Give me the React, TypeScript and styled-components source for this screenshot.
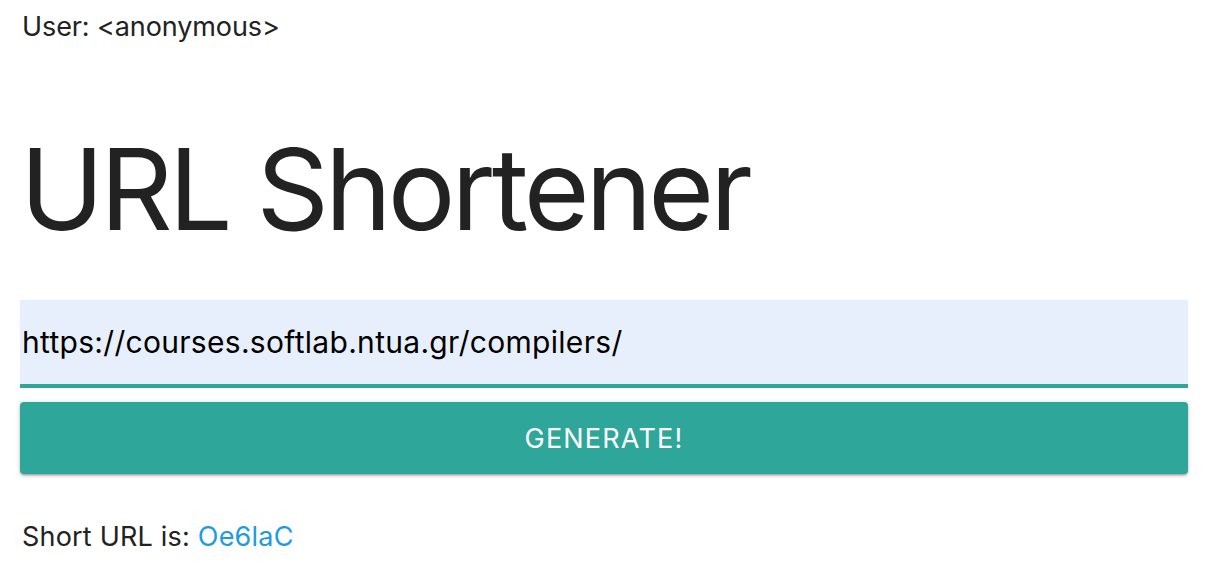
import React from "react";
import styled, { createGlobalStyle } from "styled-components";

const Global = createGlobalStyle`
  html, body { margin: 0; padding: 0; background: #fff; }
  body { font-family: Inter, "Noto Sans", sans-serif; color: #212121; }
`;

const Page = styled.div`
  padding: 0 22px 0 20px;
  display: flex;
  flex-direction: column;
`;

const UserLine = styled.div`
  font-size: 27px;
  line-height: 36px;
  padding: 9px 0 0 2px;
  color: #222;
  letter-spacing: -0.1px;
`;

const Title = styled.h1`
  margin: 74px 0 0 0;
  font-size: 113px;
  font-weight: 400;
  line-height: 140px;
  letter-spacing: -4px;
  color: #222;
`;

const Field = styled.input`
  margin-top: 41px;
  height: 88px;
  box-sizing: border-box;
  border: none;
  border-bottom: 4px solid #2ea699;
  background: #e8effc;
  padding: 0 2px;
  font-family: Inter, "Noto Sans", sans-serif;
  font-size: 30px;
  letter-spacing: 0.3px;
  color: #000;
  outline: none;
`;

const Button = styled.button`
  margin-top: 14px;
  height: 72px;
  border: none;
  border-radius: 4px;
  background: #2ea699;
  color: #fff;
  font-family: Inter, "Noto Sans", sans-serif;
  font-size: 27px;
  letter-spacing: 1.2px;
  text-transform: uppercase;
  box-shadow: 0 2px 2px 0 rgba(0,0,0,0.14), 0 3px 1px -2px rgba(0,0,0,0.12), 0 1px 5px 0 rgba(0,0,0,0.2);
  cursor: pointer;
`;

const Result = styled.p`
  margin: 45px 0 0 2px;
  font-size: 27px;
  line-height: 36px;
  color: #222;
  letter-spacing: 0.2px;
`;

const Link = styled.a`
  color: #1e9be0;
  text-decoration: none;
`;

export default function App() {
  return (
    <>
      <Global />
      <Page>
        <UserLine>User: &lt;anonymous&gt;</UserLine>
        <Title>URL Shortener</Title>
        <Field defaultValue="https://courses.softlab.ntua.gr/compilers/" />
        <Button>Generate!</Button>
        <Result>
          Short URL is: <Link href="#">Oe6laC</Link>
        </Result>
      </Page>
    </>
  );
}
